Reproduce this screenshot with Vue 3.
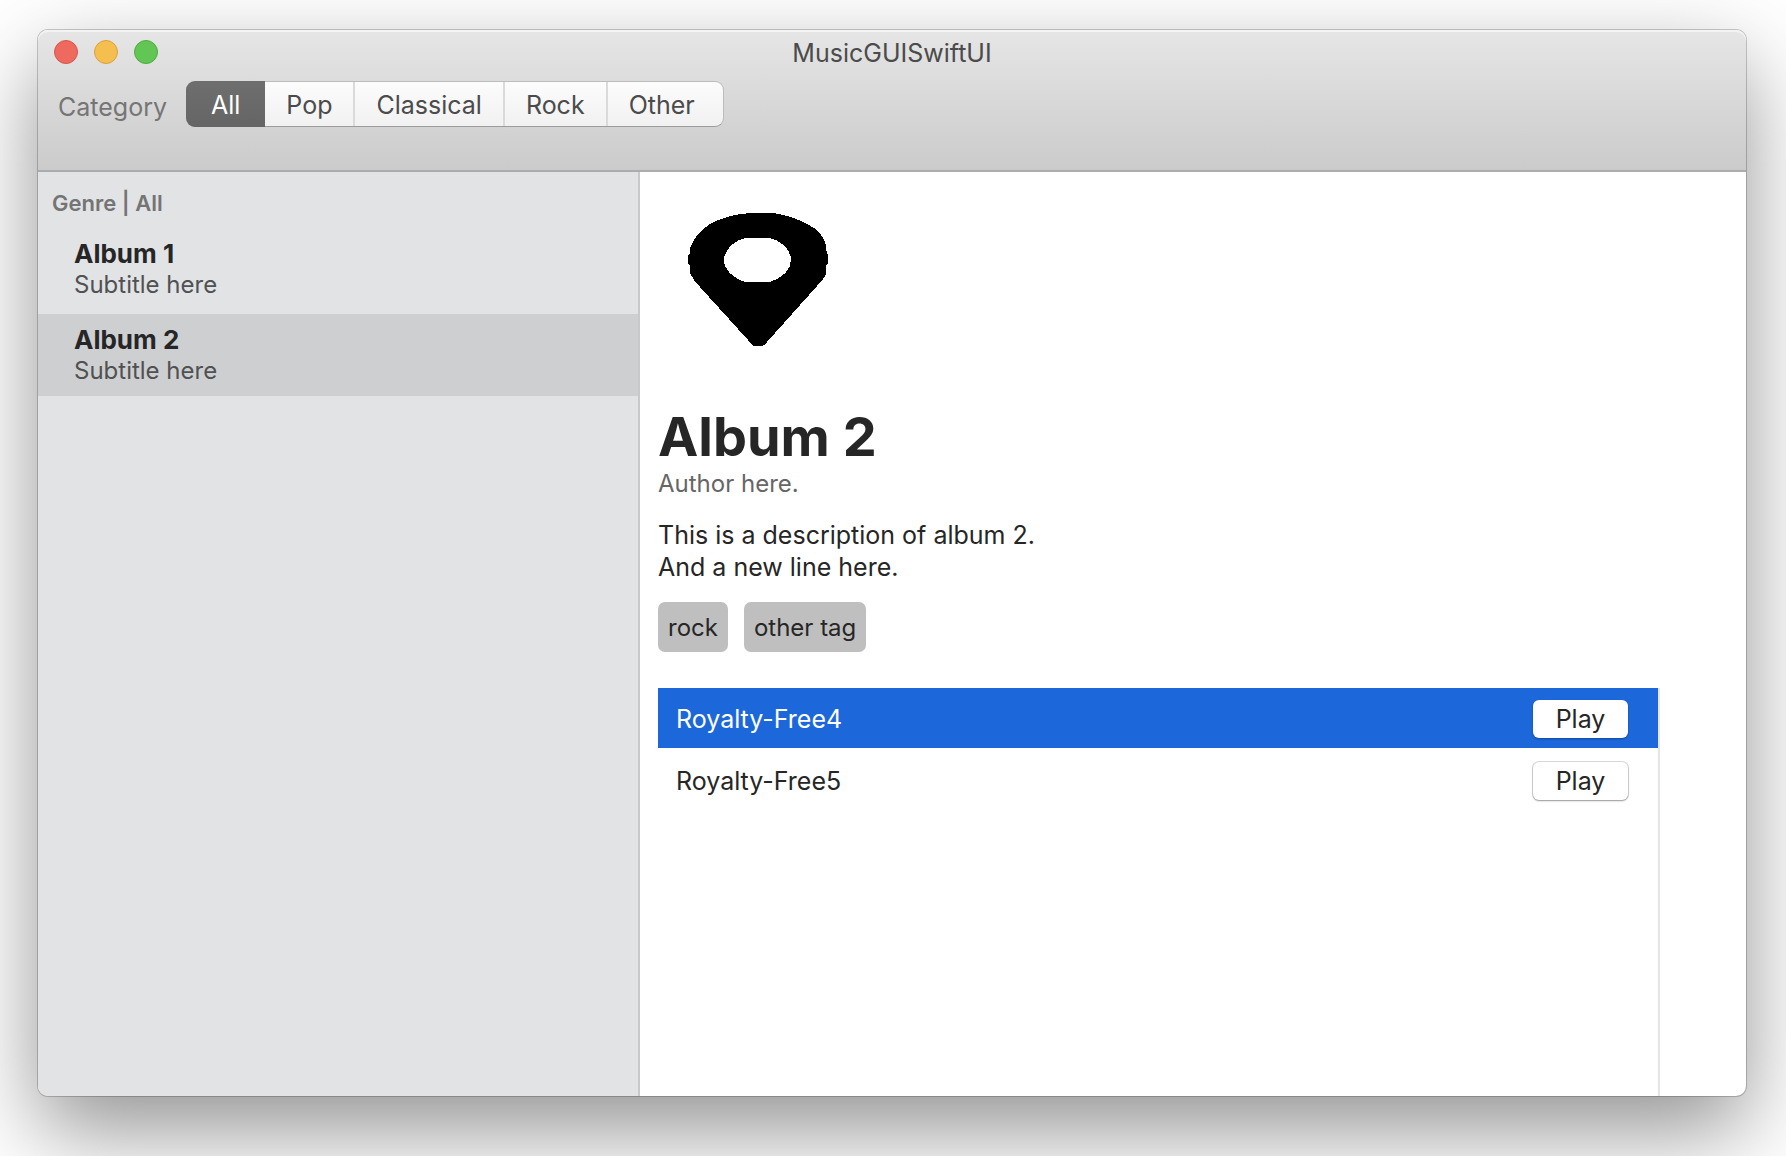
<script setup>
import { ref } from 'vue'

const categories = ['All', 'Pop', 'Classical', 'Rock', 'Other']
const category = ref('All')

const albums = [
  { title: 'Album 1', subtitle: 'Subtitle here' },
  { title: 'Album 2', subtitle: 'Subtitle here' },
]
const album = ref('Album 2')

const tags = ['rock', 'other tag']
const songs = ['Royalty-Free4', 'Royalty-Free5']
const song = ref('Royalty-Free4')
</script>

<template>
  <div class="desktop">
    <div class="window">
      <header class="toolbar">
        <div class="titlebar">
          <div class="lights">
            <button class="light close" type="button" aria-label="Close"></button>
            <button class="light minimise" type="button" aria-label="Minimise"></button>
            <button class="light zoom" type="button" aria-label="Zoom"></button>
          </div>
          <span class="window-title">MusicGUISwiftUI</span>
        </div>
        <div class="picker">
          <span id="category-label" class="picker-label">Category</span>
          <div class="segments" role="group" aria-labelledby="category-label">
            <button
              v-for="name in categories"
              :key="name"
              type="button"
              class="segment"
              :class="{ active: name === category }"
              :aria-pressed="name === category"
              @click="category = name"
            >{{ name }}</button>
          </div>
        </div>
      </header>

      <div class="body">
        <nav class="sidebar">
          <h2 class="section">Genre | {{ category }}</h2>
          <ul class="albums">
            <li v-for="item in albums" :key="item.title">
              <button
                type="button"
                class="album"
                :class="{ selected: item.title === album }"
                @click="album = item.title"
              >
                <span class="album-title">{{ item.title }}</span>
                <span class="album-subtitle">{{ item.subtitle }}</span>
              </button>
            </li>
          </ul>
        </nav>

        <main class="detail">
          <svg class="cover" viewBox="0 0 200 200" shape-rendering="crispEdges" aria-hidden="true">
            <path
              fill-rule="evenodd"
              d="M92 23 H115 C130 25 146 31 156 38 C164 44 169 52 168 59 L170 66 V73 L168 76 V84 C165 90 162 93 159 96 L109 152 C107 155 105 156 103 156 H97 C94 156 92 153 90 150 L42 97 C38 93 34 88 32 83 V76 L30 73 V66 L32 63 V58 C36 48 42 40 52 34 C62 28 77 24 92 23 Z M88 48 C76 50 66 60 66 70 C66 80 76 89 88 92 H112 C124 88 133 80 133 70 C133 60 124 51 112 48 Z"
            />
          </svg>
          <h1 class="heading">{{ album }}</h1>
          <p class="author">Author here.</p>
          <p class="description">This is a description of album 2.<br />And a new line here.</p>
          <ul class="tags">
            <li v-for="tag in tags" :key="tag" class="tag">{{ tag }}</li>
          </ul>
          <ul class="songs">
            <li
              v-for="name in songs"
              :key="name"
              class="song"
              :class="{ selected: name === song }"
              @click="song = name"
            >
              <span>{{ name }}</span>
              <button class="play" type="button">Play</button>
            </li>
          </ul>
        </main>
      </div>
    </div>
  </div>
</template>

<style>
body {
  margin: 0;
  background: #fff;
}
</style>

<style scoped>
* {
  box-sizing: border-box;
}

.desktop {
  display: flex;
  min-height: 100vh;
  padding: 30px 40px 60px 38px;
  overflow: hidden;
  font-family: Inter, "Liberation Sans", sans-serif;
  font-size: 25px;
  line-height: 32px;
  color: #262626;
}

h1, h2, p, ul {
  margin: 0;
  padding: 0;
  font-weight: 400;
}

ul {
  list-style: none;
}

button {
  margin: 0;
  border: 0;
  padding: 0;
  background: none;
  color: inherit;
  font: inherit;
}

.window {
  display: flex;
  flex: 1;
  flex-direction: column;
  min-width: 0;
  border-radius: 10px;
  background: #fff;
  box-shadow:
    0 0 0 1px rgba(0, 0, 0, 0.2),
    0 34px 88px rgba(0, 0, 0, 0.43);
}

.toolbar {
  height: 142px;
  border-bottom: 2px solid #acacac;
  border-radius: 10px 10px 0 0;
  background: linear-gradient(#e6e6e6, #cbcbcb);
  box-shadow: inset 0 2px 0 #f3f3f3;
}

.titlebar {
  display: grid;
  grid-template-columns: 1fr auto 1fr;
  align-items: center;
  height: 44px;
  padding: 0 16px;
}

.lights {
  display: flex;
  gap: 16px;
}

.light {
  width: 24px;
  height: 24px;
  border: 1px solid;
  border-radius: 50%;
}

.close {
  border-color: #d9544a;
  background: #ee6a5f;
}

.minimise {
  border-color: #dca13c;
  background: #f5bf4f;
}

.zoom {
  border-color: #4fab41;
  background: #62c655;
}

.window-title {
  padding-top: 2px;
  color: #4b4b4b;
}

.picker {
  display: flex;
  align-items: center;
  gap: 19px;
  padding: 7px 20px;
}

.picker-label {
  padding-top: 6px;
  color: #757575;
}

.segments {
  display: flex;
  height: 46px;
  border: 1px solid #bcbcbc;
  border-bottom-color: #9c9c9c;
  border-radius: 9px;
  background: linear-gradient(#fcfcfc, #f1f1f1);
}

.segment {
  padding: 2px 21px 0;
  border-right: 2px solid #dadada;
  color: #4b4b4b;
}

.segment:last-child {
  padding-right: 28px;
  border-right: 0;
}

.segment.active {
  margin: -1px 0;
  padding: 2px 25px 0;
  border-right: 0;
  background: linear-gradient(#6e6e6e, #656565);
  color: #fff;
}

.segment.active:first-child {
  margin-left: -1px;
  border-radius: 9px 0 0 9px;
}

.body {
  display: flex;
  flex: 1;
}

.sidebar {
  flex: 0 0 602px;
  border-right: 2px solid #c8c9ca;
  border-radius: 0 0 0 10px;
  background: #e2e3e5;
}

.section {
  padding: 15px 14px 9px;
  color: #747475;
  font-size: 22px;
  font-weight: 600;
}

.albums {
  display: flex;
  flex-direction: column;
  gap: 4px;
}

.album {
  display: flex;
  flex-direction: column;
  width: 100%;
  height: 82px;
  padding: 10px 36px;
  text-align: left;
}

.album.selected {
  background: #cecfd1;
}

.album-title {
  font-size: 26px;
  font-weight: 700;
  line-height: 32px;
}

.album-subtitle {
  color: #505152;
  font-size: 24px;
  line-height: 30px;
}

.detail {
  display: flex;
  flex: 1;
  flex-direction: column;
  min-width: 0;
  padding: 18px 86px 0 18px;
}

.cover {
  width: 200px;
  height: 200px;
}

.heading {
  padding-top: 15px;
  font-size: 54px;
  font-weight: 700;
  line-height: 64px;
}

.author {
  color: #666;
  font-size: 24px;
  line-height: 30px;
}

.description {
  padding-top: 20px;
}

.tags {
  display: flex;
  gap: 16px;
  padding-top: 19px;
}

.tag {
  padding: 10px 10px 8px;
  border-radius: 7px;
  background: #bfbfbf;
  font-size: 24px;
}

.songs {
  display: flex;
  flex: 1;
  flex-direction: column;
  gap: 2px;
  margin-top: 36px;
  border-right: 2px solid #e5e5e5;
}

.song {
  display: flex;
  align-items: center;
  justify-content: space-between;
  height: 60px;
  padding: 2px 30px 0 18px;
}

.song.selected {
  background: #1c67da;
  color: #fff;
}

.play {
  width: 95px;
  height: 38px;
  border-radius: 6px;
  background: #fff;
  box-shadow: 0 0 0 1px rgba(0, 0, 0, 0.14), 0 1px 2px rgba(0, 0, 0, 0.3);
  color: #262626;
}

.song.selected .play {
  box-shadow: 0 1px 2px rgba(0, 0, 0, 0.3);
}
</style>
